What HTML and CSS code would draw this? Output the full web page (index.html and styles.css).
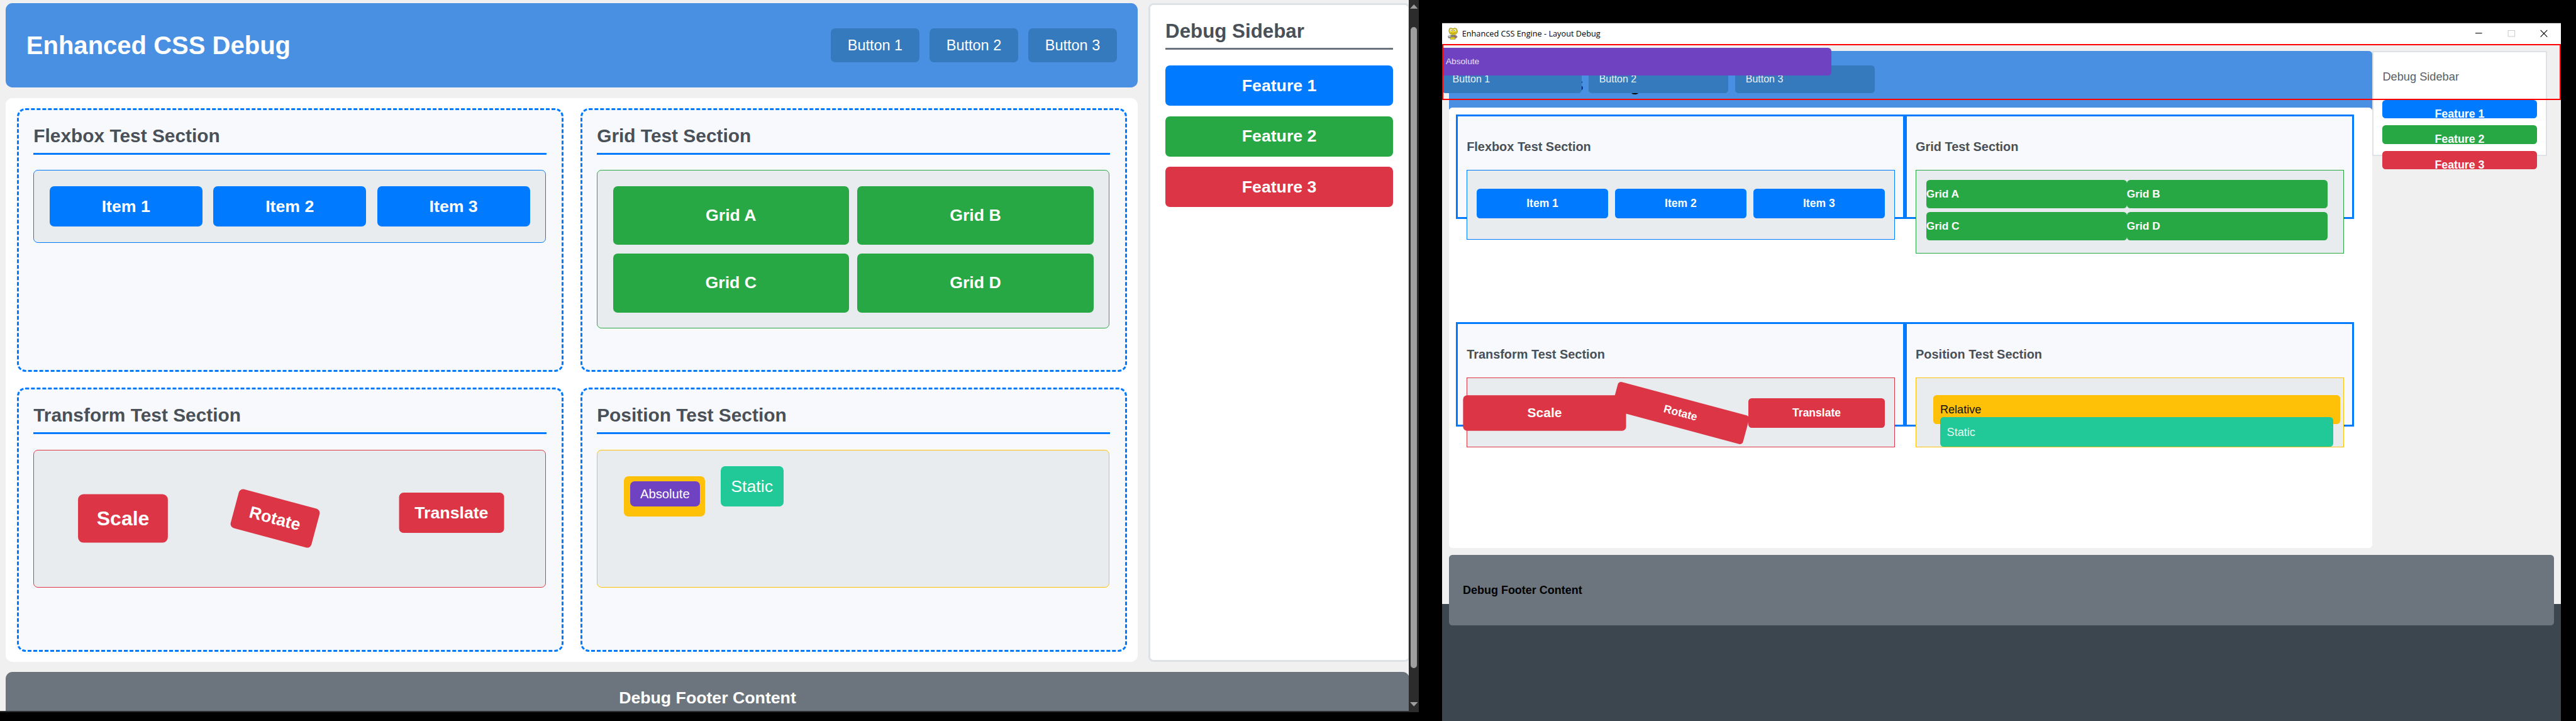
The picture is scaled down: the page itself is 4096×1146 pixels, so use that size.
FILE: index.html
```html
<!DOCTYPE html>
<html lang="en">
<head>
<meta charset="utf-8">
<title>Enhanced CSS Engine - Layout Debug</title>
<link rel="stylesheet" href="styles.css">
</head>
<body>
<div class="desktop">

  <div class="browser">
    <div class="page">
      <div class="upper">
        <div class="column">
          <header class="header">
            <h1 class="header-title">Enhanced CSS Debug</h1>
            <nav class="nav">
              <span class="nav-button">Button 1</span>
              <span class="nav-button">Button 2</span>
              <span class="nav-button">Button 3</span>
            </nav>
          </header>
          <main class="main">
            <section class="section">
              <h2 class="section-title">Flexbox Test Section</h2>
              <div class="box box-flex">
                <div class="flex-item">Item 1</div>
                <div class="flex-item">Item 2</div>
                <div class="flex-item">Item 3</div>
              </div>
            </section>
            <section class="section">
              <h2 class="section-title">Grid Test Section</h2>
              <div class="box box-grid">
                <div class="grid-item">Grid A</div>
                <div class="grid-item">Grid B</div>
                <div class="grid-item">Grid C</div>
                <div class="grid-item">Grid D</div>
              </div>
            </section>
            <section class="section">
              <h2 class="section-title">Transform Test Section</h2>
              <div class="box box-transform">
                <div class="transform-item scale">Scale</div>
                <div class="transform-item rotate">Rotate</div>
                <div class="transform-item translate">Translate</div>
              </div>
            </section>
            <section class="section">
              <h2 class="section-title">Position Test Section</h2>
              <div class="box box-position">
                <div class="relative-item"><div class="absolute-item">Absolute</div></div>
                <div class="static-item">Static</div>
              </div>
            </section>
          </main>
        </div>
        <aside class="sidebar">
          <h2 class="sidebar-title">Debug Sidebar</h2>
          <div class="feature blue">Feature 1</div>
          <div class="feature green">Feature 2</div>
          <div class="feature red">Feature 3</div>
        </aside>
      </div>
      <footer class="footer">Debug Footer Content</footer>
    </div>
    <div class="scrollbar">
      <svg class="arrow" viewBox="0 0 15 8"><path d="M7.5 0 15 8H0z" fill="#9f9f9f"/></svg>
      <div class="thumb"></div>
      <svg class="arrow" viewBox="0 0 15 8"><path d="M0 0H15L7.5 8z" fill="#9f9f9f"/></svg>
    </div>
  </div>

  <div class="window">
    <div class="titlebar">
      <svg class="app-icon" viewBox="0 0 18 21">
        <path d="M3 14h12l2 2.500-2 2-3-1H5l-3 1-1.500-2.500z" fill="#8b8b86" stroke="#444" stroke-width=".7"/>
        <path d="M1.500 12.500l4 2-1 2.500-3-1z" fill="#c9c9c9"/>
        <path d="M11 14.500l4 .5-.5 2-3.500-.5z" fill="#b0606a"/>
        <path d="M3 1.500 6 .5 9 2 12.500 .5 16 2 17.500 7 16 10.500 12.500 13H7L3.500 10.500 2 6z" fill="#e6cf1c" stroke="#6b6420" stroke-width=".7"/>
        <circle cx="6" cy="4.500" r="2.100" fill="#f4f4e4"/><circle cx="12.500" cy="4.500" r="2.100" fill="#f4f4e4"/>
        <circle cx="6.800" cy="4.800" r=".7" fill="#333"/><circle cx="11.800" cy="4.800" r=".7" fill="#333"/>
        <path d="M5 9.500Q10 12 14.500 9" fill="none" stroke="#6b6420" stroke-width=".7"/>
        <path d="M5 17h8l.5 3.500H4.500z" fill="#efdc19" stroke="#6b6420" stroke-width=".7"/>
      </svg>
      <span class="window-title">Enhanced CSS Engine - Layout Debug</span>
      <svg class="controls" viewBox="0 0 130 14" fill="none">
        <path d="M0 6.500H12" stroke="#000" stroke-width="1.200"/>
        <path d="M58.600 1.600H70.400V12.400H58.600z" stroke="#ccc" stroke-width="1.200"/>
        <path d="M116.500 1 128.500 13M128.500 1 116.500 13" stroke="#000" stroke-width="1.200"/>
      </svg>
    </div>
    <div class="client">
      <div class="client-upper">
        <div class="e-column">
          <div class="e-header">
            <div class="e-heading">Enhanced CSS Debug</div>
            <div class="e-nav">
              <span class="e-button">Button 1</span>
              <span class="e-button">Button 2</span>
              <span class="e-button">Button 3</span>
            </div>
          </div>
          <div class="e-main">
            <div class="e-section">
              <div class="e-title">Flexbox Test Section</div>
              <div class="e-box e-flex">
                <div class="e-item">Item 1</div>
                <div class="e-item">Item 2</div>
                <div class="e-item">Item 3</div>
              </div>
            </div>
            <div class="e-section">
              <div class="e-title">Grid Test Section</div>
              <div class="e-box e-grid">
                <div class="e-cell">Grid A</div>
                <div class="e-cell">Grid B</div>
                <div class="e-cell">Grid C</div>
                <div class="e-cell">Grid D</div>
              </div>
            </div>
            <div class="e-section">
              <div class="e-title">Transform Test Section</div>
              <div class="e-box e-transform">
                <div class="e-shape e-scale">Scale</div>
                <div class="e-shape e-rotate">Rotate</div>
                <div class="e-shape">Translate</div>
              </div>
            </div>
            <div class="e-section">
              <div class="e-title">Position Test Section</div>
              <div class="e-box e-position">
                <div class="e-relative">Relative</div>
                <div class="e-static">Static</div>
              </div>
            </div>
          </div>
        </div>
        <div class="e-sidebar">
          <div class="e-sidebar-title">Debug Sidebar</div>
          <div class="e-feature blue">Feature 1</div>
          <div class="e-feature green">Feature 2</div>
          <div class="e-feature red">Feature 3</div>
        </div>
      </div>
      <div class="e-footer">Debug Footer Content</div>
      <div class="e-absolute">Absolute</div>
      <div class="outline"></div>
    </div>
  </div>

</div>
</body>
</html>
```
FILE: styles.css
```css
* { box-sizing: border-box; }

body {
  margin: 0;
  background: #000;
  overflow: hidden;
  font-family: "Liberation Sans", Arial, sans-serif;
}

.desktop {
  zoom: 0.88967;
  width: 4604px;
  height: 1288px;
  display: flex;
  background: #000;
  overflow: hidden;
}

h1, h2 { margin: 0; }

.blue { background: #007bff; }
.green { background: #28a745; }
.red { background: #dc3545; }

/* Browser view */
.browser {
  width: 2536px;
  height: 1272px;
  flex: none;
  display: flex;
  background: #2c2c2c;
}

.page {
  width: 2517.5px;
  height: 1270px;
  padding: 6px 0 0 10px;
  background: #f0f0f0;
  overflow: hidden;
}

.upper {
  width: 2520px;
  height: 1176px;
  display: flex;
  gap: 19px;
}

.column {
  width: 2023px;
  flex: none;
  display: flex;
  flex-direction: column;
  gap: 19px;
}

.header {
  height: 150px;
  padding: 0 37px;
  display: flex;
  align-items: center;
  justify-content: space-between;
  border-radius: 12px;
  background: #4a90e2;
  color: #fff;
}

.header-title { font-size: 45px; line-height: 54px; }

.nav { display: flex; gap: 18.500px; }

.nav-button {
  width: 158px;
  height: 61px;
  border-radius: 8px;
  background: #357abd;
  font-size: 26.400px;
  line-height: 61px;
  text-align: center;
}

.main {
  height: 1007px;
  padding: 18px 19px 18px 20px;
  display: grid;
  grid-template-columns: 1fr 1fr;
  grid-template-rows: 1fr 1fr;
  gap: 28px 30px;
  border-radius: 12px;
  background: #fff;
}

.section {
  min-width: 0;
  padding: 27px 26.500px;
  border: 3.400px dashed #007bff;
  border-radius: 15px;
  background: #f8f9fc;
}

.section-title {
  height: 53px;
  margin-bottom: 27.500px;
  border-bottom: 3.400px solid #007bff;
  color: #495057;
  font-size: 33.600px;
  line-height: 39px;
}

.box {
  width: 916px;
  border: 1.500px solid;
  border-radius: 8px;
  background: #e9ecef;
}

.box-flex {
  height: 130px;
  padding: 27.500px;
  display: flex;
  gap: 19.500px;
  border-color: #007bff;
}

.flex-item, .grid-item, .transform-item, .feature {
  display: flex;
  align-items: center;
  justify-content: center;
  border-radius: 8px;
  color: #fff;
  font-size: 30px;
  font-weight: bold;
}

.flex-item { flex: 1; background: #007bff; }

.box-grid {
  height: 283px;
  padding: 27.500px;
  display: grid;
  grid-template-columns: 1fr 1fr;
  grid-template-rows: 1fr 1fr;
  gap: 15px;
  border-color: #28a745;
}

.grid-item { background: #28a745; }

.box-transform {
  height: 246px;
  padding-left: 92px;
  display: flex;
  align-items: center;
  border-color: #dc3545;
}

.transform-item { height: 72px; background: #dc3545; }
.scale { width: 134px; transform: scale(1.2); }
.rotate { width: 149px; margin-left: 130px; transform: rotate(15deg); }
.translate { width: 188px; margin-left: 125px; transform: translate(22px, -10px); }

.box-position {
  height: 246px;
  padding: 28px 0 0 31px;
  display: flex;
  align-items: flex-start;
  gap: 44px;
  border-color: #ffc107;
}

.relative-item {
  width: 145px;
  height: 71px;
  position: relative;
  top: 19px;
  left: 16px;
  border-radius: 8px;
  background: #ffc107;
}

.absolute-item {
  position: absolute;
  top: 9px;
  left: 11px;
  width: 125px;
  height: 45px;
  border-radius: 8px;
  background: #6f42c1;
  color: #fff;
  font-size: 22.800px;
  line-height: 45px;
  text-align: center;
}

.static-item {
  width: 112px;
  height: 72px;
  border-radius: 8px;
  background: #20c997;
  color: #fff;
  font-size: 30px;
  line-height: 72px;
  text-align: center;
}

.sidebar {
  width: 468px;
  flex: none;
  padding: 27px 25px 0 27.500px;
  border: 3.400px solid #dee2e6;
  border-radius: 9px;
  background: #fff;
}

.sidebar-title {
  width: 407px;
  height: 53px;
  margin-bottom: 28px;
  border-bottom: 3.400px solid #6c757d;
  color: #495057;
  font-size: 35.200px;
  line-height: 41px;
}

.feature { width: 407px; height: 71.500px; margin-bottom: 19px; }

.footer {
  width: 2509px;
  height: 120px;
  margin-top: 19px;
  border-radius: 12px;
  background: #6c757d;
  color: #fff;
  font-size: 30px;
  font-weight: bold;
  line-height: 94px;
  text-align: center;
}

.scrollbar {
  width: 18.500px;
  height: 1270px;
  padding: 8px 0;
  display: flex;
  flex-direction: column;
  align-items: center;
}

.arrow { width: 14px; height: 7.500px; }

.thumb {
  width: 11px;
  height: 1146px;
  margin: 32.500px 0 61px;
  border-radius: 6px;
  background: #9f9f9f;
}

/* Engine window */
.window {
  width: 2000.500px;
  height: 1248px;
  flex: none;
  margin: 40px 0 0 41px;
  border-top: 1.200px solid #333;
  background: #3c464f;
}

.titlebar {
  height: 38px;
  padding: 0 23.500px 0 11px;
  display: flex;
  align-items: center;
  background: #fff;
}

.app-icon { width: 18px; height: 21px; }

.window-title {
  margin-left: 7px;
  color: #000;
  font-family: "Open Sans", "Noto Sans", sans-serif;
  font-size: 14.300px;
  white-space: nowrap;
}

.controls { width: 130px; height: 14px; margin-left: auto; }

.client {
  position: relative;
  height: 1000px;
  padding: 12px 12.500px 0;
  background: #f0f0f0;
}

.client-upper { height: 888px; display: flex; }

.e-column { width: 1650.500px; flex: none; }

.e-header {
  height: 104px;
  padding-top: 25.700px;
  border-radius: 6px 6px 0 0;
  background: #4a90e2;
}

/* The heading runs underneath the button row. */
.e-heading {
  height: 49px;
  margin-bottom: -49px;
  padding-left: 27px;
  color: #000;
  font-size: 30px;
  font-weight: bold;
  line-height: 73px;
}

.e-nav {
  position: relative;
  display: flex;
  gap: 12px;
  margin-left: -12.500px;
}

.e-button {
  width: 250px;
  height: 49.500px;
  padding-left: 19px;
  border-radius: 6px;
  background: #357abd;
  color: #e9f0f8;
  font-size: 18px;
  line-height: 49px;
}

.e-main {
  position: relative;
  height: 787.500px;
  margin-top: -3.300px;
  padding: 12.300px 33px 0 12.500px;
  display: grid;
  grid-template-columns: 1fr 1fr;
  grid-template-rows: 371px 371px;
  border-radius: 6px;
  background: #fff;
}

.e-section {
  min-width: 0;
  height: 187.500px;
  padding: 0 16px;
  border: 3.400px solid #007bff;
  background: #f8f9fc;
}

.e-title {
  height: 95.500px;
  padding-top: 42.500px;
  color: #495057;
  font-size: 22.400px;
  font-weight: bold;
  line-height: 26px;
}

.e-box {
  width: 765px;
  border: 1.500px solid;
  background: #e9ecef;
}

.e-flex {
  height: 125.500px;
  padding: 33.500px 17px 0;
  display: flex;
  gap: 12.700px;
  border-color: #007bff;
}

.e-item, .e-shape {
  height: 53px;
  flex: 1;
  border-radius: 6px;
  background: #007bff;
  color: #fff;
  font-size: 19.700px;
  font-weight: bold;
  line-height: 53px;
  text-align: center;
}

.e-grid {
  height: 150.500px;
  padding: 17px 28px 0 17.500px;
  display: grid;
  grid-template-columns: 1fr 1fr;
  grid-template-rows: 50.500px 50.500px;
  row-gap: 7.500px;
  border-color: #28a745;
}

.e-cell {
  border-radius: 6px;
  background: #28a745;
  color: #fff;
  font-size: 19.500px;
  font-weight: bold;
  line-height: 51px;
}

.e-transform {
  height: 125px;
  padding: 36px 17px 0;
  display: flex;
  border-color: #dc3545;
}

.e-shape { background: #dc3545; }
.e-scale { transform: scale(1.2); }
.e-rotate { transform: rotate(15deg); }

.e-position {
  height: 125px;
  padding: 30.500px 5px 0 30.500px;
  border-color: #ffc107;
}

.e-relative {
  height: 52.500px;
  padding-left: 12px;
  border-radius: 6px;
  background: #ffc107;
  color: #111;
  font-size: 20.400px;
  line-height: 53px;
}

.e-static {
  width: 702.500px;
  height: 53px;
  margin: -13px 0 0 12px;
  padding-left: 12px;
  border-radius: 6px;
  background: #20c997;
  color: #e6f8f2;
  font-size: 20.400px;
  line-height: 54px;
}

.e-sidebar {
  width: 312px;
  height: 188px;
  padding: 0 16px;
  border: 2.300px solid #dee2e6;
  background: #fff;
}

.e-sidebar-title {
  height: 85px;
  padding-top: 31px;
  color: #5a6067;
  font-size: 20.500px;
  line-height: 24px;
}

.e-feature {
  width: 275.500px;
  height: 33px;
  margin-bottom: 12.700px;
  border-radius: 6px;
  color: #fff;
  font-size: 20px;
  font-weight: bold;
  line-height: 50px;
  text-align: center;
}

.e-footer {
  position: relative;
  height: 126px;
  margin-top: 12px;
  padding-left: 25px;
  border-radius: 6px;
  background: #6c757d;
  color: #000;
  font-size: 20.200px;
  font-weight: bold;
  line-height: 128px;
}

.e-absolute {
  position: absolute;
  left: 0;
  top: 6.300px;
  width: 696px;
  height: 49.700px;
  padding-left: 7px;
  border-radius: 0 6px 6px 0;
  background: #6f42c1;
  color: #e8e0f5;
  font-size: 15.400px;
  line-height: 50px;
}

/* Debug rectangle drawn over the header row. */
.outline {
  position: absolute;
  left: 0;
  top: 0;
  width: 100%;
  height: 100px;
  border: 2.500px solid #f00;
}
```
